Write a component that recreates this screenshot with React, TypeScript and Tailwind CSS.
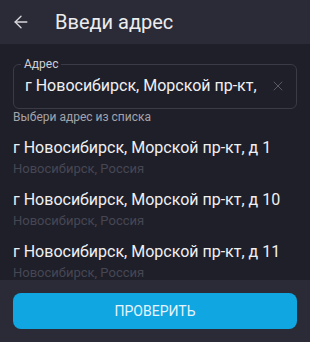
import { ArrowLeft, X } from 'lucide-react';

const items = [
    'г Новосибирск, Морской пр-кт, д 1',
    'г Новосибирск, Морской пр-кт, д 10',
    'г Новосибирск, Морской пр-кт, д 11',
];

export default function App() {
    return (
        <div className="flex h-[342px] w-[310px] flex-col bg-[#1f1f2a] font-['Roboto',sans-serif]">
            {/* Header */}
            <div className="flex h-[44px] shrink-0 items-center bg-[#2a2b37]">
                <ArrowLeft className="ml-[11px] h-[20px] w-[20px] text-[#d8d8dc]" strokeWidth={1.6} />
                <h1 className="ml-[24px] text-[20px] leading-none text-[#ececee]">Введи адрес</h1>
            </div>

            {/* Content */}
            <div className="flex-1 overflow-hidden px-[13px] pt-[13px]">
                <fieldset className="relative h-[52px] rounded-[6px] border border-[#3a3b47] pl-[11px] pr-[10px]">
                    <legend className="ml-[-4px] px-[3px] text-[12px] leading-[14px] text-[#cfd0d4]">Адрес</legend>
                    <div className="flex items-center pt-[4px]">
                        <span className="flex-1 truncate text-[16px] leading-[22px] text-[#f0f0f2]">г Новосибирск, Морской пр-кт,</span>
                        <X className="h-[16px] w-[16px] text-[#5e5f6a]" strokeWidth={1.4} />
                    </div>
                </fieldset>
                <p className="mt-0 text-[12px] leading-[16px] text-[#a3a4ab]">Выбери адрес из списка</p>

                <ul className="mt-[13px] flex flex-col">
                    {items.map((t) => (
                        <li key={t} className="h-[52px]">
                            <div className="text-[16px] leading-[20px] text-[#f0f0f2]">{t}</div>
                            <div className="mt-[3px] text-[13px] leading-[16px] text-[#464753]">Новосибирск, Россия</div>
                        </li>
                    ))}
                </ul>
            </div>

            {/* Footer */}
            <div className="flex h-[62px] shrink-0 items-start bg-[#2a2b37] px-[13px] pt-[13px]">
                <button className="h-[36px] w-full rounded-[8px] bg-[#10a6e2] text-[14px] text-[#e8f4fb]">
                    ПРОВЕРИТЬ
                </button>
            </div>
        </div>
    );
}
